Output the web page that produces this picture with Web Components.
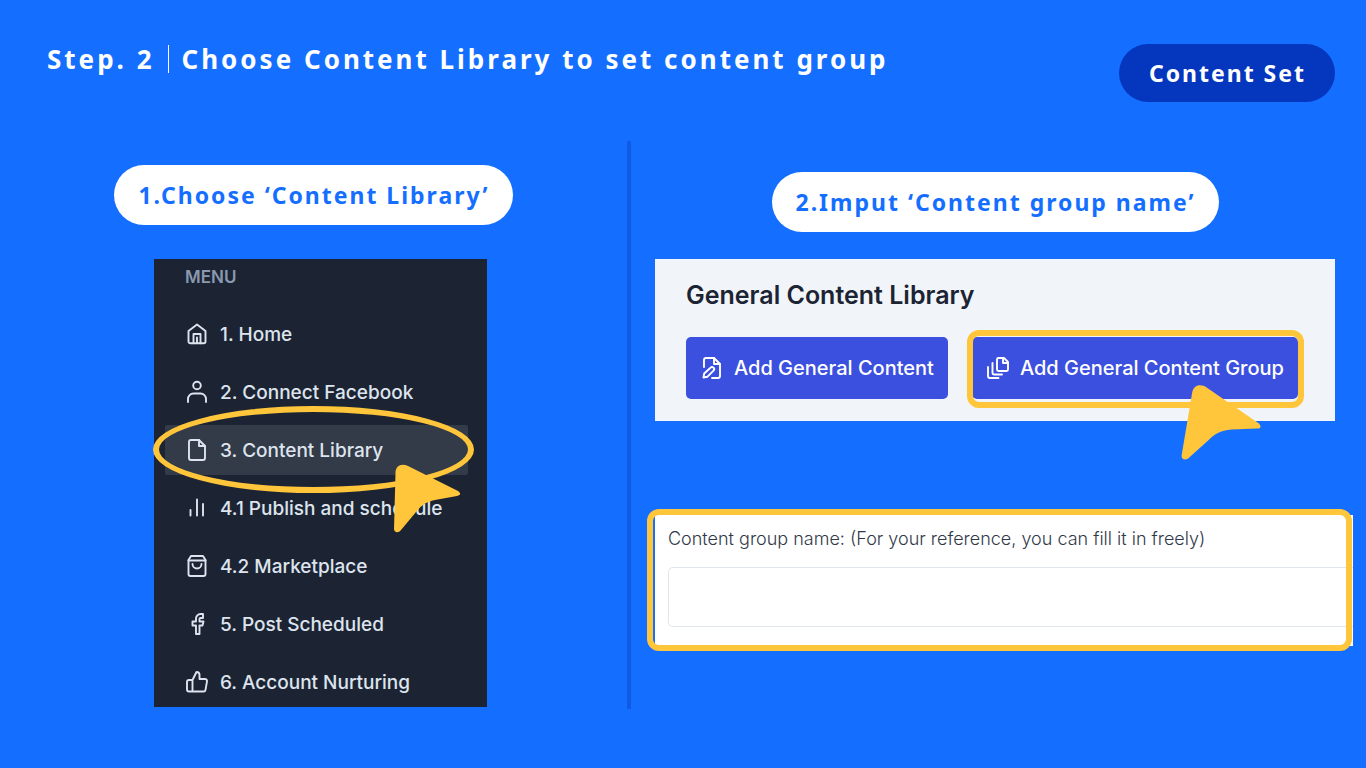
<!DOCTYPE html>
<html lang="en">
<head>
<meta charset="UTF-8">
<meta name="viewport" content="width=device-width, initial-scale=1">
<title>Content Set</title>
<style>
    :root {
        --blue: #146eff;
        --navy: #0536be;
        --rule: #0f5be6;
        --accent: #ffc53b;
    }

    body {
        margin: 0;
        min-height: 100vh;
        background: var(--blue);
        font-family: 'Noto Sans', sans-serif;
    }
</style>
</head>
<body>
<guide-slide></guide-slide>

<script>
const ICONS = {
    home: '<path d="M3.5 9 12 2.5 20.500 9v10.500a1.800 1.800 0 0 1-1.800 1.800H5.300a1.800 1.800 0 0 1-1.800-1.800Z"/><path d="M8.500 21.300V12h7v9.300M12 15.500v5.800"/>',
    user: '<circle cx="12" cy="5.500" r="3.800"/><path d="M3 22v-3a5.500 5.500 0 0 1 5.500-5.500h7A5.500 5.500 0 0 1 21 19v3"/>',
    file: '<path d="M14 2H6a2 2 0 0 0-2 2v16a2 2 0 0 0 2 2h12a2 2 0 0 0 2-2V8Z"/><path d="M14 2v6h6"/>',
    chart: '<path d="M5.500 14V19.500M12 3.500v16M18 8v11.500"/>',
    bag: '<path d="M3.500 6 6 2h12l2.500 4v14a2 2 0 0 1-2 2h-13a2 2 0 0 1-2-2Z"/><path d="M3.500 6.500h17M16.500 10a4.500 4.500 0 0 1-9 0"/>',
    facebook: '<path d="M18 2h-2.500A4.500 4.500 0 0 0 11 6.500V9.500H7.500v4H11v8.500h3.500v-8.500h3l1-4h-4V7a1 1 0 0 1 1-1H18Z"/>',
    thumb: '<path d="M7.500 21.500V10L11.500 2a3 3 0 0 1 3 3v4H20a2 2 0 0 1 2 2.300l-1.500 8.500a2 2 0 0 1-2 1.700H4a2 2 0 0 1-2-2V12a2 2 0 0 1 2-2h3.500"/>',
    edit: '<path d="M4 11V4a2 2 0 0 1 2-2h8l6 6v12a2 2 0 0 1-2 2h-6"/><path d="M14 2v6h6"/><path d="m3.500 21.500.700-4 6.300-5.800a2 2 0 0 1 3 3l-6 6Z"/>',
    copies: '<path d="M18 2h-5.500A1.500 1.500 0 0 0 11 3.500v10a1.500 1.500 0 0 0 1.500 1.500h8a1.500 1.500 0 0 0 1.500-1.500V6Z"/><path d="M17 2.500V7h5M6.500 7v10a1.500 1.500 0 0 0 1.500 1.500h8M2 11v9a2 2 0 0 0 2 2h8.500"/>'
};

class LineIcon extends HTMLElement {
    connectedCallback() {
        this.attachShadow({ mode: 'open' });
        this.shadowRoot.innerHTML = `
            <style>
                :host { display: block; flex: none; width: 24px; height: 24px; }
                svg {
                    display: block; width: 100%; height: 100%;
                    fill: none; stroke: currentColor; stroke-width: 1.900;
                    stroke-linecap: round; stroke-linejoin: round;
                }
            </style>
            <svg viewBox="0 0 24 24" aria-hidden="true">${ICONS[this.getAttribute('name')]}</svg>
        `;
    }
}

class PointerArrow extends HTMLElement {
    connectedCallback() {
        this.attachShadow({ mode: 'open' });
        this.shadowRoot.innerHTML = `
            <style>
                :host { display: block; width: 66px; pointer-events: none; }
                svg { display: block; width: 100%; overflow: visible; fill: var(--accent); }
            </style>
            <svg viewBox="0 0 66 69" aria-hidden="true">
                <path d="M1.500 9C1.500 1 8-1 14 2L64 27C67 29 67 31.500 63 32L41 36C31 38 26 43 22 48L7 66C4 70 0 68 0 65Z"/>
            </svg>
        `;
    }
}

class PillLabel extends HTMLElement {
    connectedCallback() {
        this.attachShadow({ mode: 'open' });
        this.shadowRoot.innerHTML = `
            <style>
                :host {
                    display: block;
                    padding: 0 23px 0 24px;
                    border-radius: 30px;
                    background: #fff;
                    color: var(--blue);
                    font-size: 23px;
                    font-weight: 700;
                    line-height: 60px;
                    letter-spacing: 2px;
                    white-space: nowrap;
                }
                :host([dark]) {
                    padding: 0 29px 0 30px;
                    background: var(--navy);
                    color: #fff;
                    line-height: 58px;
                }
            </style>
            <slot></slot>
        `;
    }
}

class SlideHeader extends HTMLElement {
    connectedCallback() {
        this.attachShadow({ mode: 'open' });
        this.shadowRoot.innerHTML = `
            <style>
                :host { display: block; }
                header {
                    display: flex;
                    justify-content: space-between;
                    align-items: flex-start;
                    padding: 44px 31px 0 47px;
                }
                h1 {
                    display: flex;
                    align-items: center;
                    gap: 13px;
                    margin: 0;
                    color: #fff;
                    font-size: 26px;
                    font-weight: 700;
                    line-height: 30px;
                    letter-spacing: 3px;
                }
                i { width: 1px; height: 28px; background: #fff; }
            </style>
            <header>
                <h1><span>Step. 2</span><i></i><span>Choose Content Library to set content group</span></h1>
                <pill-label dark>Content Set</pill-label>
            </header>
        `;
    }
}

class MenuItem extends HTMLElement {
    connectedCallback() {
        this.attachShadow({ mode: 'open' });
        this.shadowRoot.innerHTML = `
            <style>
                :host { display: block; position: relative; }
                a {
                    display: flex;
                    align-items: center;
                    gap: 11px;
                    height: 50px;
                    padding-left: 20px;
                    border-radius: 2px;
                    color: #dee4ee;
                    font-size: 19px;
                    font-weight: 500;
                    text-decoration: none;
                    white-space: nowrap;
                }
                :host([active]) { z-index: 1; }
                :host([active]) a { background: #333a48; }
                .ring {
                    position: absolute;
                    inset: -19px -6px -18px -12px;
                    border: 6px solid var(--accent);
                    border-radius: 50%;
                    pointer-events: none;
                }
                pointer-arrow { position: absolute; left: 229px; top: 39px; }
            </style>
            <a href="#"><line-icon name="${this.getAttribute('icon')}"></line-icon><slot></slot></a>
            ${this.hasAttribute('active') ? '<div class="ring"></div><pointer-arrow></pointer-arrow>' : ''}
        `;
    }
}

class SideMenu extends HTMLElement {
    connectedCallback() {
        this.attachShadow({ mode: 'open' });
        this.shadowRoot.innerHTML = `
            <style>
                :host {
                    display: block;
                    box-sizing: border-box;
                    width: 333px;
                    padding: 0 19px 0 11px;
                    background: #1c2434;
                    font-family: Inter, sans-serif;
                }
                h2 {
                    margin: 0 0 14px;
                    padding-left: 20px;
                    color: #8a99af;
                    font-size: 17px;
                    font-weight: 600;
                    line-height: 36px;
                }
                nav { display: flex; flex-direction: column; gap: 8px; }
            </style>
            <h2>MENU</h2>
            <nav>
                <menu-item icon="home">1. Home</menu-item>
                <menu-item icon="user">2. Connect Facebook</menu-item>
                <menu-item icon="file" active>3. Content Library</menu-item>
                <menu-item icon="chart">4.1 Publish and schedule</menu-item>
                <menu-item icon="bag">4.2 Marketplace</menu-item>
                <menu-item icon="facebook">5. Post Scheduled</menu-item>
                <menu-item icon="thumb">6. Account Nurturing</menu-item>
            </nav>
        `;
    }
}

class ActionButton extends HTMLElement {
    connectedCallback() {
        this.attachShadow({ mode: 'open' });
        this.shadowRoot.innerHTML = `
            <style>
                :host { display: block; position: relative; }
                button {
                    display: flex;
                    align-items: center;
                    gap: 10px;
                    height: 62px;
                    padding: 0 14px;
                    border: 0;
                    border-radius: 5px;
                    background: #3c50e0;
                    color: #fff;
                    font: 500 20px Inter, sans-serif;
                    white-space: nowrap;
                }
                .ring {
                    position: absolute;
                    inset: -7px -6px -9px -5px;
                    border: 6px solid var(--accent);
                    border-radius: 12px;
                    pointer-events: none;
                }
                pointer-arrow {
                    position: absolute;
                    right: 38px;
                    top: 51px;
                    width: 74px;
                    transform: rotate(8deg);
                }
            </style>
            <button type="button"><line-icon name="${this.getAttribute('icon')}"></line-icon><slot></slot></button>
            ${this.hasAttribute('marked') ? '<div class="ring"></div><pointer-arrow></pointer-arrow>' : ''}
        `;
    }
}

class LibraryPanel extends HTMLElement {
    connectedCallback() {
        this.attachShadow({ mode: 'open' });
        this.shadowRoot.innerHTML = `
            <style>
                :host {
                    display: block;
                    padding: 18px 31px 22px;
                    background: #f1f5f9;
                    font-family: Inter, sans-serif;
                }
                h2 {
                    margin: 0 0 24px;
                    color: #1c2434;
                    font-size: 25px;
                    font-weight: 600;
                    line-height: 36px;
                }
                .actions { display: flex; gap: 24px; }
            </style>
            <h2>General Content Library</h2>
            <div class="actions">
                <action-button icon="edit">Add General Content</action-button>
                <action-button icon="copies" marked>Add General Content Group</action-button>
            </div>
        `;
    }
}

class GroupForm extends HTMLElement {
    connectedCallback() {
        this.attachShadow({ mode: 'open' });
        this.shadowRoot.innerHTML = `
            <style>
                :host {
                    display: block;
                    position: relative;
                    padding: 11px 0 19px 13px;
                    background: #fff;
                    font-family: Inter, sans-serif;
                }
                label {
                    display: block;
                    margin-bottom: 15px;
                    color: #313949;
                    font-size: 18px;
                    font-weight: 300;
                    line-height: 26px;
                }
                input {
                    display: block;
                    box-sizing: border-box;
                    width: 100%;
                    height: 60px;
                    padding: 0 20px;
                    border: 1px solid #e2e6ee;
                    border-right: 0;
                    border-radius: 5px 0 0 5px;
                    background: #fff;
                    font: 300 18px Inter, sans-serif;
                }
                .ring {
                    position: absolute;
                    inset: -6px 1px -5px -8px;
                    border: 6px solid var(--accent);
                    border-radius: 12px;
                    pointer-events: none;
                }
            </style>
            <label for="group-name">Content group name: (For your reference, you can fill it in freely)</label>
            <input id="group-name" type="text">
            <div class="ring"></div>
        `;
    }
}

class GuideSlide extends HTMLElement {
    connectedCallback() {
        this.attachShadow({ mode: 'open' });
        this.shadowRoot.innerHTML = `
            <style>
                :host { display: block; }
                main {
                    display: grid;
                    grid-template-columns: 627fr 4px 735fr;
                    margin-top: 39px;
                    padding-bottom: 59px;
                }
                .rule { background: var(--rule); }
                section { display: flex; flex-direction: column; align-items: center; }
                .choose { padding: 24px 0 2px; }
                .choose side-menu { margin: 34px 0 0 14px; }
                .input { padding: 31px 31px 0 24px; }
                library-panel { align-self: stretch; margin-top: 27px; }
                group-form { align-self: stretch; margin: 94px -18px 0 0; }
            </style>
            <slide-header></slide-header>
            <main>
                <section class="choose">
                    <pill-label>1.Choose ‘Content Library’</pill-label>
                    <side-menu></side-menu>
                </section>
                <div class="rule"></div>
                <section class="input">
                    <pill-label>2.Imput ‘Content group name’</pill-label>
                    <library-panel></library-panel>
                    <group-form></group-form>
                </section>
            </main>
        `;
    }
}

customElements.define('line-icon', LineIcon);
customElements.define('pointer-arrow', PointerArrow);
customElements.define('pill-label', PillLabel);
customElements.define('slide-header', SlideHeader);
customElements.define('menu-item', MenuItem);
customElements.define('side-menu', SideMenu);
customElements.define('action-button', ActionButton);
customElements.define('library-panel', LibraryPanel);
customElements.define('group-form', GroupForm);
customElements.define('guide-slide', GuideSlide);
</script>
</body>
</html>
